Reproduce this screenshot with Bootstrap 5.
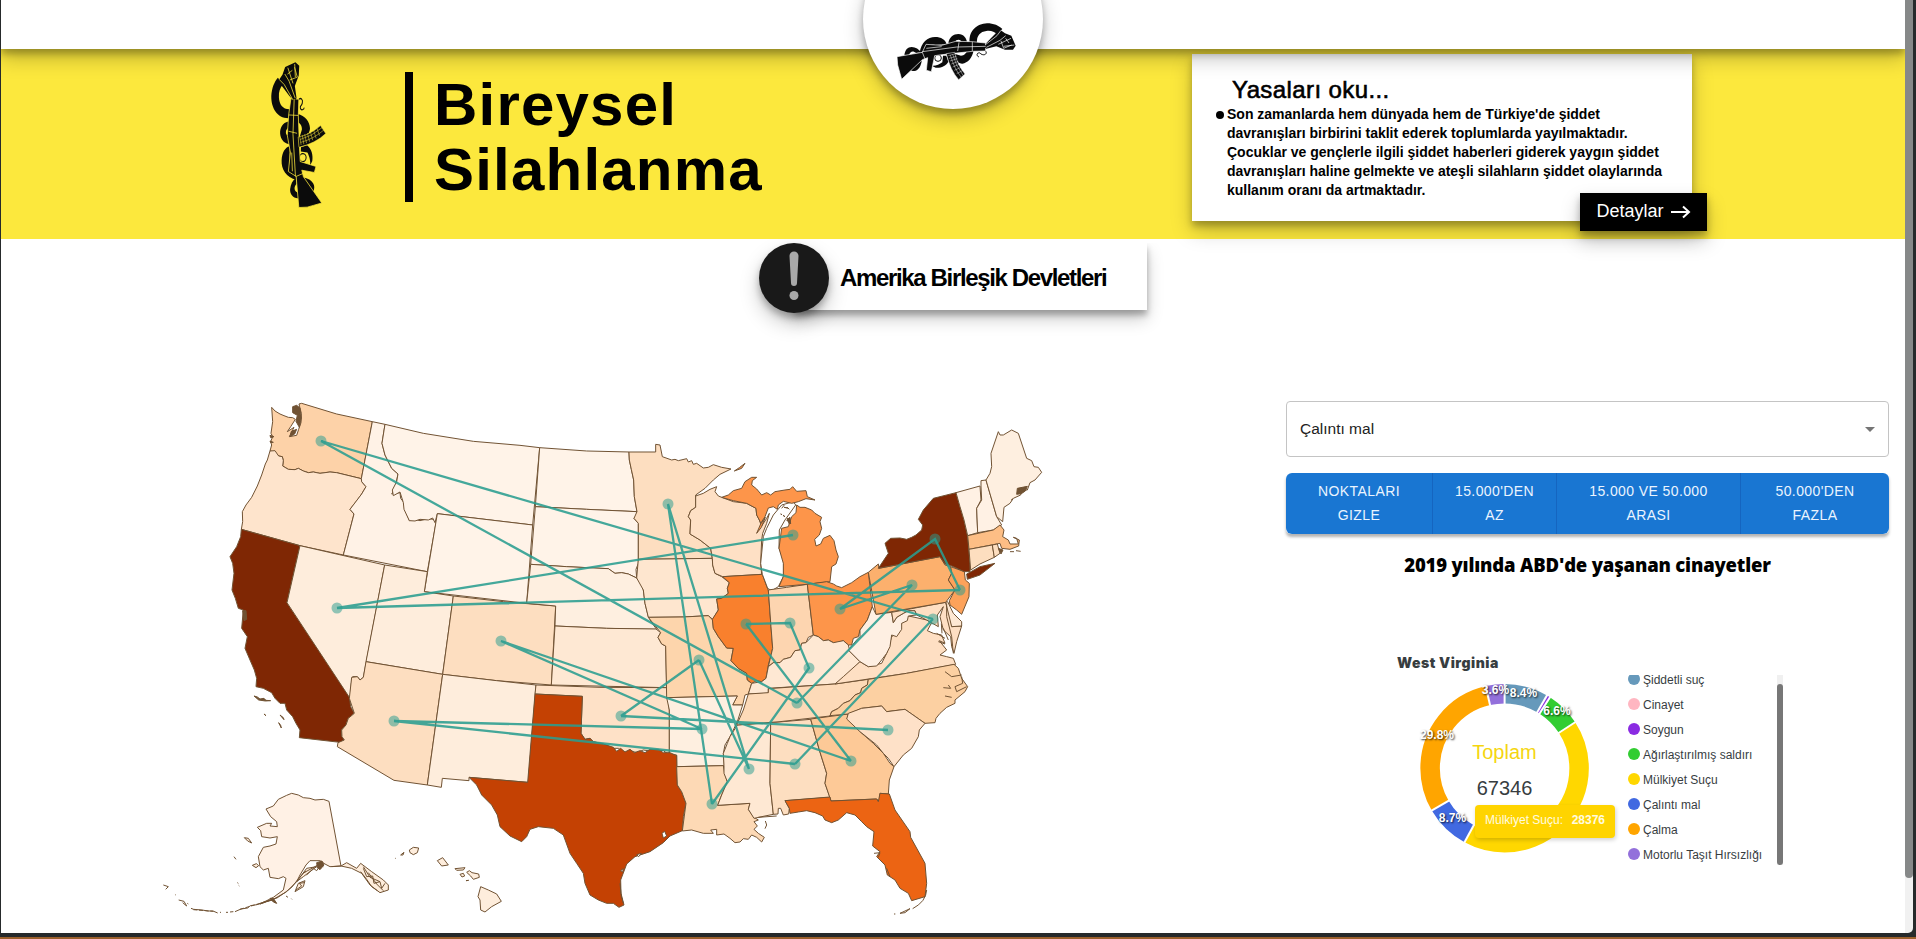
<!DOCTYPE html>
<html lang="tr">
<head>
<meta charset="utf-8">
<meta name="viewport" content="width=device-width, initial-scale=1">
<title>Bireysel Silahlanma</title>
<link href="https://cdn.jsdelivr.net/npm/bootstrap@5.3.0/dist/css/bootstrap.min.css" rel="stylesheet">
<style>
  html, body { height: 939px; overflow: hidden; }
  body { background: #9c602c; font-family: "Liberation Sans", Arial, sans-serif; color: #000; line-height: 1.2; }
  .desk { width: 1916px; height: 937px; background: #262a2b; padding: 0 3px 4px 1px; }
  .page-area { width: 1904px; height: 933px; background: #fff; }
  .page-scroll { width: 8px; height: 933px; background: #f1f1f1; border-radius: 0 0 5px 0; }
  .page-scroll .thumb-bar { height: 878px; background: #868888; border-radius: 0 0 4px 4px; }
  .deep-shadow { box-shadow: 0 10px 20px rgba(0,0,0,.22), 0 5px 7px rgba(0,0,0,.26); }
  .top-strip { height: 49px; z-index: 3; }
  .top-logo { width: 180px; height: 180px; left: 862px; top: -71px; z-index: 4; padding-top: 86px; clip-path: inset(71px -40px -40px -40px); }
  .hero { height: 190px; background: #fce83d; padding-left: 254px; z-index: 2; }
  .hero-title { margin: 23px 0 0 60px; width: 760px; height: 130px; border-left: 8px solid #000; padding: 0 0 0 21px; font-size: 60px; line-height: 65px; font-weight: 700; letter-spacing: 1.2px; }
  .law-card { width: 500px; height: 167px; margin: 5px 0 0 27px; padding: 22px 16px 0 24px; }
  .law-card h2 { font-size: 24px; line-height: 28px; font-weight: 400; margin: 0 0 0 16px; letter-spacing: .4px; -webkit-text-stroke: .6px #000; }
  .law-card p { font-size: 14px; line-height: 19px; font-weight: 700; margin: 1px 0 0 3px; white-space: nowrap; }
  .dot-mark { width: 8px; height: 8px; border-radius: 50%; background: #000; margin-top: 7px; }
  .more-btn { right: -15px; bottom: -10px; width: 127px; height: 38px; background: #000; color: #fff; font-size: 18px; border: 0; gap: 7px; padding: 0; }
  .country { height: 151px; padding-top: 4px; padding-left: 758px; }
  .country-card { width: 353px; height: 67px; margin-left: 35px; padding-left: 46px; font-size: 24px; font-weight: 700; letter-spacing: -1.35px; white-space: nowrap; box-shadow: 0 9px 16px rgba(0,0,0,.2), 0 5px 6px rgba(0,0,0,.27); clip-path: inset(0 -30px -40px -30px); line-height: 70px; }
  .alert-disc { width: 70px; height: 70px; background: #191919; left: 0; top: 0; }
  .map-box { margin-left: 149px; width: 910px; height: 540px; }
  .state-path path { stroke: #705233; stroke-width: 3; stroke-linejoin: round; }
  .side { width: 603px; margin-left: 226px; padding-top: 11px; }
  .crime-select { height: 56px; border: 1px solid #c4c4c4; border-radius: 4px; padding: 0 13px; font-size: 15.5px; color: #222; }
  .range-group { height: 61px; margin-top: 16px; box-shadow: 0 3px 3px rgba(0,0,0,.3); border-radius: 5px; }
  .range-group .btn { background: #1976d2; color: #eaf4ff; border: 0; border-right: 1px solid #1565c0; font-size: 14px; line-height: 24px; letter-spacing: .4px; padding: 0 0 2px; flex: none; margin: 0 !important; }
  .range-group .btn:last-child { border-right: 0; }
  .year-title { font: 800 18.5px/30px "Open Sans", sans-serif; margin: 16px 0 73px; letter-spacing: -.18px; white-space: nowrap; }
  .state-title { font: 900 14px/20px Inter, sans-serif; color: #373d3f; margin: 0 0 2px 111px; letter-spacing: .5px; }
  .chart-row { margin-left: 128px; height: 190px; }
  .slice-label { font-size: 12px; font-weight: 700; fill: #fff; text-anchor: middle; text-shadow: 1px 1px 2px rgba(0,0,0,.8); }
  .chart-tip { left: 61px; top: 130px; width: 140px; height: 33px; background: #ffd400; border-radius: 4px; color: #fffbe0; font-size: 12px; box-shadow: 1px 2px 4px rgba(0,0,0,.18); padding: 0 10px 2px; white-space: nowrap; }
  .legend-box { margin-left: 14px; width: 149px; height: 190px; overflow: hidden; font-size: 12px; color: #373d3f; }
  .legend-box > div { height: 25px; gap: 3px; white-space: nowrap; padding-top: 1px; }
  .legend-box > div:first-child { margin-top: -8px; }
  .legend-box i { width: 12px; height: 12px; border-radius: 50%; flex: none; margin-top: -3px; }
  .legend-scroll { width: 6px; height: 190px; background: #f0f0f0; padding-top: 9px; }
  .legend-scroll div { height: 181px; background: #777; border-radius: 3px; }
</style>
</head>
<body>
<svg width="0" height="0" class="position-absolute" aria-hidden="true">
  <defs>
    <g id="emblem">
      <g fill="#0b0b0b">
        <path d="M254 84C250 48 276 26 306 25C326 25 342 32 352 42L336 58C328 50 318 46 304 48C286 50 274 62 276 84Z"/>
        <path d="M190 86C192 66 206 57 220 57C236 58 245 68 247 86L232 86C230 76 222 72 214 76L206 86Z"/>
        <path d="M104 114C108 82 128 66 150 66C168 66 182 74 185 88L150 90C138 88 128 92 124 108Z"/>
        <path d="M208 116L228 122C238 122 244 114 246 108L266 106C262 130 248 144 232 146C220 146 212 138 208 124Z"/>
        <path d="M140 152C150 154 164 148 172 142L174 122L184 122L190 140C182 154 166 160 152 158Z"/>
        <path d="M58 122C60 104 68 96 80 96C92 97 102 102 108 112L94 114C84 106 76 108 72 120Z"/>
        <path d="M60 150L104 138L110 135C110 150 100 168 88 168C74 168 66 160 60 150Z"/>
      </g>
      <g fill="none" stroke="#0b0b0b">
        <circle cx="159" cy="129" r="10" stroke-width="3"/>
        <path stroke-width="3" d="M300 107c8 6 2 14-7 12s-6-7-13-5-3 12 2 11"/>
      </g>
      <path fill="#0b0b0b" stroke="var(--gap)" stroke-width="2" d="M36 125L112 112L123 88L170 91L212 79L262 80L302 84L302 108L262 109L180 118L149 122L139 170L124 166L128 128L112 134L50 193L43 168L38 150Z"/>
      <path fill="#0b0b0b" stroke="var(--gap)" stroke-width="1.500" d="M184 116Q196 166 221 194L240 177Q216 148 209 112Z"/>
      <path fill="#0b0b0b" d="M298 96C304 78 330 62 342 42L360 55L379 62L392 92L384 104L360 104L334 94L304 101Z"/>
      <g fill="none" stroke="var(--gap)" stroke-width="2">
        <path d="M112 110L215 96L302 94M124 100L170 95M222 82L218 108M262 80V109M112 112L120 132"/>
        <path d="M300 90L336 62L348 46M304 97L345 76L362 62M340 88L378 70M348 78L356 100L380 90M356 94L388 90M362 70L372 84"/>
        <path stroke-width="1.300" d="M190 122L212 116M192 130L214 124M195 138L217 131M199 147L220 139M203 156L225 147M208 166L230 156M215 176L234 166M196 120Q207 160 229 187M203 118Q212 152 235 182"/>
      </g>
    </g>
  </defs>
</svg>

<div class="desk d-flex">
  <div class="page-area position-relative overflow-hidden">
    <header class="top-strip bg-white position-relative deep-shadow"></header>
    <div class="top-logo bg-white rounded-circle position-absolute deep-shadow" style="--gap:#fff">
      <svg class="d-block" style="margin-left:22px" width="140" height="75" viewBox="0 0 420 225"><use href="#emblem"/></svg>
    </div>

    <section class="hero d-flex position-relative" style="--gap:#fce83d">
      <svg class="flex-shrink-0" style="margin-top:1px" width="90" height="165" viewBox="0 0 270 495"><use href="#emblem" transform="translate(166 445) rotate(-87) scale(1.22 1) translate(-60 -158)"/></svg>
      <h1 class="hero-title flex-shrink-0">Bireysel<br>Silahlanma</h1>
      <div class="law-card bg-white position-relative flex-shrink-0 deep-shadow">
        <h2>Yasaları oku...</h2>
        <div class="d-flex">
          <span class="dot-mark"></span>
          <p>Son zamanlarda hem dünyada hem de Türkiye'de şiddet<br>davranışları birbirini taklit ederek toplumlarda yayılmaktadır.<br>Çocuklar ve gençlerle ilgili şiddet haberleri giderek yaygın şiddet<br>davranışları haline gelmekte ve ateşli silahların şiddet olaylarında<br>kullanım oranı da artmaktadır.</p>
        </div>
        <button class="more-btn position-absolute d-flex align-items-center justify-content-center deep-shadow">Detaylar
          <svg width="20" height="14" viewBox="0 0 20 14" fill="none" stroke="#fff" stroke-width="2"><path d="M0 7H18M12 1.5L18 7L12 12.5"/></svg>
        </button>
      </div>
    </section>

    <section class="country">
      <div class="position-relative">
        <div class="country-card bg-white">Amerika Birleşik Devletleri</div>
        <div class="alert-disc position-absolute rounded-circle deep-shadow">
          <svg width="70" height="70" viewBox="0 0 70 70" fill="#a9a9a9"><path d="M30.5 13a4.5 4.5 0 0 1 9 0L38 40a3 3 0 0 1-6 0Z"/><circle cx="35" cy="52.500" r="4.500"/></svg>
        </div>
      </div>
    </section>

    <main class="d-flex">
      <svg class="map-box flex-shrink-0" viewBox="150 390 910 540">
        <!-- West -->
        <g class="state-path" transform="translate(220 390) scale(.33333)">
          <path fill="#fdd2a8" d="M155 52L165 63L180 72L192 77L205 82L218 83L226 88L212 110L202 125L222 112L208 140L230 136L236 118L243 98L244 70L237 42L245 40L350 72L457 95L424 266L350 248L330 246L300 250L280 246L265 248L250 243L235 235L225 239L205 238L188 228L190 212L187 200L176 198L165 186L150 183L155 165L152 155L158 140L153 130L158 95Z"/>
          <path fill="#fee4cc" d="M150 183L165 182L176 198L187 200L190 212L188 228L205 238L225 239L235 235L250 243L265 248L280 246L300 250L330 246L350 248L424 266L425 275L438 290L425 312L412 330L390 358L402 372L370 495L240 467L64 418L68 395L67 365L78 345L95 322L112 288L125 255L136 222L142 210Z"/>
          <path fill="#7f2704" d="M64 418L240 467L201 638L388 918L392 950L403 970L385 985L378 1005L365 1020L366 1040L373 1050L360 1057L238 1043L240 1020L228 1000L218 980L200 960L195 940L180 940L165 925L155 908L130 895L108 890L110 865L103 840L90 810L75 775L82 740L65 715L70 660L55 655L46 625L36 600L42 550L38 520L30 500L50 470L62 440Z"/>
          <path fill="#feeddc" d="M240 467L494 525L430 862L420 870L412 860L398 860L394 880L390 925L201 638Z"/>
          <path fill="#fff2e6" d="M457 95L495 103L486 160L495 195L515 235L534 252L525 295L515 312L540 308L542 325L552 338L555 358L568 392L585 388L600 392L625 386L640 388L648 398L622 545L370 495L402 372L390 358L425 312L438 290L425 275L424 266Z"/>
          <path fill="#fff3e8" d="M495 103L610 130L760 154L900 166L959 173L938 405L652 371L645 398L638 384L625 390L600 388L585 393L568 392L552 358L550 338L540 306L520 317L517 300L530 275L534 252L515 235L495 195L486 160Z"/>
          <path fill="#fff3e8" d="M652 371L938 405L920 640L613 605Z"/>
          <path fill="#feeddc" d="M494 525L622 545L613 605L700 618L668 853L438 815Z"/>
          <path fill="#fddec0" d="M700 618L850 635L1007 648L994 885L830 872L668 853Z"/>
          <path fill="#fddec0" d="M438 815L668 853L622 1185L522 1171L352 1070L354 1058L373 1050L366 1040L365 1020L378 1005L385 985L403 970L388 925L395 862L412 860L420 870L430 862Z"/>
          <path fill="#feeddc" d="M668 853L830 872L948 885L925 1177L747 1162L747 1172L667 1165L664 1192L622 1185Z"/>
          <path fill="#705233" d="M218 50l12 -4l10 8l4 30l-6 28l-10 -18l4 -18l-14 -8zM214 124l16 -6l-6 14l-14 8zM102 918l10 3l8 6l12 -2l6 6l14 1l-16 1l-20 -3zM132 972l6 5zM180 975l10 8l2 6zM176 998l6 8l2 8zM68 662l10 0l2 26l-8 4zM150 136l12 4l-10 3zM150 153l10 4l-8 1z"/>
        </g>
        <!-- Central -->
        <g class="state-path" transform="translate(500 420) scale(.33333)">
          <path fill="#fff3e8" d="M119 83L260 93L387 96L388 120L394 148L401 180L403 230L411 275L260 268L106 260Z"/>
          <path fill="#fff3e8" d="M106 260L260 268L411 275L412 285L402 295L415 310L415 430L408 448L410 474L385 462L365 458L345 460L325 446L200 440L92 433Z"/>
          <path fill="#feefe0" d="M92 433L200 440L325 446L345 460L365 458L385 462L410 474L425 490L430 510L435 550L445 590L455 608L470 628L320 625L165 618L167 558L80 550Z"/>
          <path fill="#fee8d3" d="M165 618L320 625L468 627L482 638L474 652L485 672L497 678L500 803L154 795Z"/>
          <path fill="#fee1c7" d="M108 795L300 802L500 803L508 870L508 1005L490 992L470 990L450 993L430 990L410 998L390 992L375 998L355 985L340 985L310 972L280 965L270 955L255 958L243 940L247 829L105 822Z"/>
          <path fill="#fddec0" d="M387 96L467 96L467 73L480 75L487 110L515 120L525 118L535 122L560 116L565 126L575 122L580 133L590 130L610 144L625 142L640 134L665 142L693 147L660 163L640 180L615 205L587 225L587 262L572 272L565 290L572 300L570 342L600 360L632 385L637 415L415 418L415 310L402 295L411 275L403 230L401 180L394 148L388 120Z"/>
          <path fill="#fee6cf" d="M415 418L637 415L638 435L645 460L665 470L688 488L682 505L685 520L665 535L650 537L655 570L638 598L625 587L550 591L445 592L435 550L430 510L410 474Z"/>
          <path fill="#fdd5ac" d="M445 592L550 591L625 587L638 600L640 625L655 650L680 684L700 685L693 722L715 745L740 760L742 780L755 790L745 822L735 825L728 855L698 855L712 828L500 833L497 678L485 672L474 652L482 638Z"/>
          <path fill="#fee0c5" d="M587 228L610 220L630 208L650 200L645 215L655 228L665 232L700 245L740 250L768 265L770 285L778 300L785 318L800 295L808 280L800 310L788 340L785 360L782 430L785 463L668 470L645 460L638 435L637 415L632 385L600 360L570 342L572 300L565 290L572 272L587 262Z"/>
          <path fill="#f9802d" d="M668 470L787 463L805 512L813 620L818 685L805 735L798 775L785 785L770 782L755 790L742 780L740 760L715 745L693 722L700 685L680 684L655 650L640 625L637 598L655 570L650 537L665 535L685 520L682 505L688 488Z"/>
          <path fill="#fff" d="M787 463L782 430L790 350L800 325L820 285L845 255L880 245L887 255L855 300L838 330L837 385L852 420L850 470L835 500L815 512L803 505Z"/>
          <path fill="#fd954a" d="M665 232L685 225L700 212L725 205L735 185L755 172L770 172L757 182L755 195L770 207L785 225L800 218L812 225L825 215L855 210L870 208L878 200L890 214L918 212L922 230L945 240L918 236L895 245L875 250L850 244L835 255L832 268L820 260L805 264L795 290L782 310L778 300L770 285L768 265L740 250L700 242Z"/>
          <path fill="#fd954a" d="M703 153l15 -10l17 -13l-10 15zM845 265l8 -10M862 262l6 6M850 285l4 6zM862 295l10 8l-2 16zM770 340l12 -28l14 -20l-12 30z"/>
          <path fill="#fdd5b0" d="M805 510L860 502L922 493L940 645L925 652L918 668L905 670L900 690L885 692L872 712L850 718L840 728L820 728L805 740L818 685L813 620Z"/>
          <path fill="#feefe0" d="M500 833L712 828L698 855L728 855L712 905L700 930L690 950L675 975L670 1000L673 1037L530 1040L530 1005L508 1003L508 870Z"/>
        </g>
        <!-- South -->
        <g class="state-path" transform="translate(450 720) scale(.33333)">
          <path fill="#c44103" d="M255 -78L397 -71L393 40L405 58L420 55L430 65L460 72L490 82L500 94L512 85L525 96L540 88L553 98L570 92L585 98L600 88L625 88L640 98L660 98L680 107L682 195L695 215L708 250L700 290L697 332L660 348L640 368L600 395L555 410L530 432L512 480L513 520L522 555L507 562L490 550L470 550L445 540L420 525L405 490L400 460L380 430L360 400L340 345L310 325L265 320L240 328L230 350L215 365L180 348L150 320L142 285L125 255L95 225L80 195L57 172L233 187Z"/>
          <path fill="#fff" stroke="none" d="M636 340l8 -6l6 14l-10 6zM560 404l14 -4l-8 10zM512 452l8 -6l-2 10z"/>
          <path fill="#fdd9b5" d="M680 140L820 137L824 160L832 185L815 225L803 256L900 250L895 268L912 292L925 300L912 305L922 318L912 328L925 340L943 352L935 366L920 352L905 345L895 358L880 356L870 366L855 368L840 355L822 342L800 345L800 328L782 330L790 340L760 340L725 330L697 333L708 250L695 215L682 195Z"/>
          <path fill="#fee8d3" d="M862 15L962 8L960 190L970 283L945 288L912 295L895 268L900 250L803 256L815 225L832 185L822 160L822 137L820 100L832 70L840 50Z"/>
          <path fill="#fddec0" d="M962 8L1082 -2L1108 90L1130 160L1125 190L1140 232L1005 242L1018 265L1016 282L1000 285L992 265L985 265L984 282L970 283L960 190Z"/>
          <path fill="#fdc997" d="M1082 -3L1195 -18L1192 -5L1215 20L1230 35L1270 70L1300 100L1320 130L1332 140L1318 180L1315 222L1290 220L1288 245L1280 237L1143 243L1125 190L1130 160L1108 90Z"/>
          <path fill="#ec6413" d="M1005 242L1140 231L1143 243L1280 237L1285 245L1290 220L1318 222L1335 270L1380 335L1382 352L1425 430L1430 490L1425 530L1385 542L1375 520L1350 505L1335 480L1312 465L1305 435L1280 410L1290 395L1268 378L1272 335L1250 320L1235 305L1215 285L1190 278L1165 300L1145 308L1125 300L1118 288L1095 278L1070 272L1045 276L1020 280L1018 265Z"/>
          <path fill="none" d="M1430 510Q1428 545 1388 566M1350 580L1380 566L1365 578ZM1332 582L1336 582M946 303L950 315L945 326M510 490L514 530L520 550M925 292L980 288M1310 445L1320 470M1272 400L1290 398L1285 412"/>
        </g>
        <!-- East -->
        <g class="state-path" transform="translate(780 420) scale(.33333)">
          <path fill="#fd954a" d="M-3 500L10 470L10 430L-3 385L5 325L25 320L35 290L48 278L50 255L60 262L75 262L95 270L105 280L125 292L120 305L125 325L118 345L104 358L108 378L122 372L130 355L150 346L162 362L168 390L175 410L168 432L155 440L150 485L80 493Z"/>
          <path fill="#fd954a" d="M82 493L140 485L160 492L170 498L185 503L215 488L240 470L265 457L277 560L262 600L240 630L235 650L220 655L215 675L205 675L190 662L175 668L160 668L145 660L130 662L115 650L100 645Z"/>
          <path fill="#fee8d3" d="M100 645L115 650L130 662L145 660L160 668L190 662L205 675L210 695L240 725L200 770L165 792L-35 805L-35 820L-95 822L-85 790L-55 785L-42 775L-35 740L-20 728L0 728L10 718L32 712L45 692L60 690L65 670L78 668Z"/>
          <path fill="#fddab8" d="M-95 822L-35 818L-35 806L165 792L265 778L262 795L245 805L242 818L225 825L210 842L190 850L175 865L155 875L150 888L0 905L-130 915L-110 870Z"/>
          <path fill="#fedfc3" d="M165 792L190 770L240 725L265 740L305 730L320 700L335 650L350 640L370 600L385 588L405 592L440 600L455 608L442 632L460 640L485 645L495 670L478 662L500 690L480 705L500 710L520 715L527 733L380 760Z"/>
          <path fill="#feefe2" d="M277 560L288 583L335 577L340 608L350 592L370 580L385 572L405 572L410 585L385 588L382 602L365 610L365 628L350 650L335 645L330 680L320 700L305 720L290 738L265 740L240 725L205 690L230 660L240 650L240 630L262 600Z"/>
          <path fill="#fedfc3" d="M335 577L497 547L512 590L515 620L545 618L530 665L522 700L515 680L512 650L490 630L485 610L480 590L490 560L472 585L475 620L440 600L410 585L405 572L385 572L370 580L350 592L340 608Z"/>
          <path fill="#fee8d3" d="M497 547L503 545L520 580L545 605L545 618L515 620Z"/>
          <path fill="#fcb06d" d="M265 457L295 432L297 445L480 410L495 435L512 440L515 460L505 480L525 510L497 547L288 583Z"/>
          <path fill="#fda25a" d="M512 440L553 455L556 480L568 490L567 530L545 583L530 570L510 555L508 542L525 510L505 480L515 460Z"/>
          <path fill="#7f2704" d="M295 445L325 400L315 370L332 355L360 354L380 358L395 352L408 345L425 330L428 315L415 298L430 270L460 235L528 218L540 260L552 300L563 350L570 430L570 455L553 455L515 438L495 432L480 410ZM560 462L600 440L645 430L600 465L562 478Z"/>
          <path fill="#fff1e4" d="M528 218L600 198L603 240L590 265L593 338L563 347L552 300L540 260Z"/>
          <path fill="#fff1e4" d="M603 198L603 182L618 180L650 290L665 315L640 330L593 338L590 265L605 240Z"/>
          <path fill="#feefe0" d="M618 180L630 160L635 140L633 100L655 35L660 45L670 45L695 30L715 40L740 115L755 122L762 140L775 142L785 157L765 180L750 188L742 210L725 210L722 225L700 235L690 250L672 262L668 305L650 290Z"/>
          <path fill="#fdbe85" d="M563 347L640 330L660 315L672 330L668 350L685 360L690 372L715 372L710 355L700 352L718 360L716 378L690 388L665 385L660 370L567 388Z"/>
          <path fill="#fddebf" d="M567 388L637 375L643 412L600 432L572 450Z"/>
          <path fill="#fddebf" d="M637 375L652 372L660 400L643 412Z"/>
          <path fill="#fcd0a2" d="M150 887L155 875L175 865L190 850L210 842L225 825L242 818L245 805L262 795L265 778L380 760L522 733L535 745L545 775L563 800L555 815L525 840L525 850L500 862L480 880L468 895L465 908L435 910L375 868L320 875L305 858L245 865L205 882Z"/>
          <path fill="#fee1c8" d="M205 880L245 865L305 858L320 875L375 868L435 910L418 930L415 950L395 985L370 1005L342 1040L325 1015L310 1000L290 975L240 935L200 897Z"/>
          <path fill="none" d="M495 755L515 770L545 765M490 803L512 805L505 795M495 828L515 832M470 640L495 655M475 665L495 672M500 550L500 590L515 650L520 700M484 610L486 640M490 625L505 660M690 395l12 0M708 392l14 2M545 770L548 790L525 800L530 815L560 800"/>
          <path fill="#705233" stroke-width="1" d="M712 205l30 -6l-6 14l-12 8l-14 2zM655 385l14 5l-6 12zM694 240l4 -3zM2 282l4 2zM12 262l12 2zM20 300l10 -8l2 20z"/>
        </g>
        <!-- Alaska and Hawaii -->
        <g class="state-path" transform="translate(150 740) scale(.33333)">
          <path fill="#fff1e5" d="M425 160L445 165L460 173L480 175L495 180L520 178L537 184L573 378L540 380L525 372L510 362L480 362L468 375L450 405L440 425L410 455L370 478L330 492L370 472L400 450L408 415L400 410L385 416L360 412L355 385L340 390L330 380L325 350L340 322L360 318L378 312L382 290L360 294L335 290L332 272L322 262L350 250L365 250L360 258L382 260L380 245L362 230L348 207L370 198L385 178L410 166Z"/>
          <path fill="#feeddc" d="M573 378L590 368L620 385L632 370L665 395L700 420L715 435L715 450L690 458L660 435L635 400L605 385ZM435 455L445 430L465 422L460 440ZM440 425L470 385L500 380L460 410ZM307 376l12 -5l7 6l-8 6zM283 293l12 2l10 14l-12 -6zM778 330L790 322L806 324L802 338L790 344L780 338ZM862 362L878 353L895 375L875 378ZM915 386L945 383L940 390L920 391ZM930 403l10 -3l4 8l-8 3zM950 397l8 -5l8 6l20 4l2 10l-18 6l-8 -10zM752 345l10 -8l-3 8zM948 422l8 -1zM735 355l2 0M992 440L1015 450L1040 462L1054 484L1025 500L1005 516L992 510L990 480L984 470Z"/>
          <path fill="#705233" stroke-width="1" d="M500 368l16 -5l6 12l-12 14l-8 -6zM360 475l10 0l10 15l-10 -4z"/>
          <path fill="none" stroke-width="4" d="M640 385L650 410L668 408L672 430L690 425L695 445L705 430M632 395L650 418L665 440L682 452M655 398L680 432L700 452M438 450L455 438L448 430L462 428M470 405L490 385L500 392L512 375L520 380"/>
          <path fill="none" d="M40 435l15 5l-8 8M75 463l2 2M86 480l16 4l8 14l-12 -10M112 490l3 2M123 505l8 3l25 2l18 3l15 0l14 6M210 517l3 0M228 517l6 0M240 516l10 -1M255 515l18 -8l20 -3l8 -7l20 -3l20 -6l20 -8l20 -6l25 -17l20 -16l14 -18l20 -23l8 -6M252 350l6 8M262 428l3 2M266 436l2 2M408 468l6 4M424 476l2 2M462 398L495 380L515 368M330 490L350 484L370 480L378 490M545 380L573 378M640 380L660 412L690 425"/>
          <path stroke-width="7" fill="none" d="M130 509L190 514M270 508L330 490L368 478" stroke-dasharray="12 5"/>
        </g>
        <g fill="none" stroke="#2a9d8f" stroke-width="2.300" stroke-opacity=".88">
          <path d="M321 441L797 703M321 441L933 619M337 608L793 535M337 608L960 590M501 641L702 729M501 641L851 761M394 721L702 729M394 721L795 764M668 504L712 804M668 504L749 769M699 660L621 716M699 660L749 769M621 716L888 730M746 624L790 623L809 668L712 804M746 624L851 761M797 703L912 585L840 609L935 539L960 590M795 764L933 619"/>
        </g>
        <g fill="#2a9d8f" fill-opacity=".52">
          <circle cx="321" cy="441" r="5.500"/><circle cx="337" cy="608" r="5.500"/><circle cx="501" cy="641" r="5.500"/><circle cx="394" cy="721" r="5.500"/><circle cx="668" cy="504" r="5.500"/><circle cx="793" cy="535" r="5.500"/><circle cx="746" cy="624" r="5.500"/><circle cx="790" cy="623" r="5.500"/><circle cx="809" cy="668" r="5.500"/><circle cx="797" cy="703" r="5.500"/><circle cx="699" cy="660" r="5.500"/><circle cx="621" cy="716" r="5.500"/><circle cx="702" cy="729" r="5.500"/><circle cx="712" cy="804" r="5.500"/><circle cx="749" cy="769" r="5.500"/><circle cx="795" cy="764" r="5.500"/><circle cx="851" cy="761" r="5.500"/><circle cx="888" cy="730" r="5.500"/><circle cx="933" cy="619" r="5.500"/><circle cx="960" cy="590" r="5.500"/><circle cx="935" cy="539" r="5.500"/><circle cx="912" cy="585" r="5.500"/><circle cx="840" cy="609" r="5.500"/>
        </g>
      </svg>

      <aside class="side flex-shrink-0">
        <div class="crime-select d-flex align-items-center justify-content-between">
          <span>Çalıntı mal</span>
          <svg width="10" height="5" viewBox="0 0 10 5"><path fill="#757575" d="M0 0H10L5 5Z"/></svg>
        </div>
        <div class="range-group btn-group d-flex">
          <button class="btn" style="width:147px">NOKTALARI<br>GIZLE</button>
          <button class="btn" style="width:124px">15.000'DEN<br>AZ</button>
          <button class="btn" style="width:184px">15.000 VE 50.000<br>ARASI</button>
          <button class="btn" style="width:148px">50.000'DEN<br>FAZLA</button>
        </div>
        <h3 class="year-title text-center">2019 yılında ABD'de yaşanan cinayetler</h3>
        <h4 class="state-title">West Virginia</h4>
        <div class="chart-row d-flex position-relative">
          <svg class="flex-shrink-0" width="200" height="190" viewBox="1414 675 200 190">
            <g fill="none" stroke-width="19.500" transform="rotate(-90 1504.600 768.200)">
              <circle cx="1504.600" cy="768.200" r="74.500" stroke="#6699bb" pathLength="100" stroke-dasharray="8.400 91.600"/>
              <circle cx="1504.600" cy="768.200" r="74.500" stroke="#8a2be2" pathLength="100" stroke-dasharray=".8 99.200" stroke-dashoffset="-8.400"/>
              <circle cx="1504.600" cy="768.200" r="74.500" stroke="#32cd32" pathLength="100" stroke-dasharray="6.600 93.400" stroke-dashoffset="-9.200"/>
              <circle cx="1504.600" cy="768.200" r="74.500" stroke="#ffd700" pathLength="100" stroke-dasharray="42.100 57.900" stroke-dashoffset="-15.800"/>
              <circle cx="1504.600" cy="768.200" r="74.500" stroke="#4169e1" pathLength="100" stroke-dasharray="8.700 91.300" stroke-dashoffset="-57.900"/>
              <circle cx="1504.600" cy="768.200" r="74.500" stroke="#ffa500" pathLength="100" stroke-dasharray="29.800 70.200" stroke-dashoffset="-66.600"/>
              <circle cx="1504.600" cy="768.200" r="74.500" stroke="#9370db" pathLength="100" stroke-dasharray="3.600 96.400" stroke-dashoffset="-96.400"/>
            </g>
            <g stroke="#fff" stroke-width="2" transform="translate(1504.600 768.200)">
              <path d="M0 -64V-86" transform="rotate(0)"/><path d="M0 -64V-86" transform="rotate(30.200)"/><path d="M0 -64V-86" transform="rotate(32.600)"/><path d="M0 -64V-86" transform="rotate(56.900)"/><path d="M0 -64V-86" transform="rotate(208.400)"/><path d="M0 -64V-86" transform="rotate(239.800)"/><path d="M0 -64V-86" transform="rotate(347)"/>
            </g>
            <text class="slice-label" x="1495.500" y="694">3.6%</text>
            <text class="slice-label" x="1523.500" y="697">8.4%</text>
            <text class="slice-label" x="1557" y="715">6.6%</text>
            <text class="slice-label" x="1437" y="739">29.8%</text>
            <text class="slice-label" x="1452.500" y="822">8.7%</text>
            <text x="1504.500" y="759" text-anchor="middle" font-size="20" fill="#f5d60f">Toplam</text>
            <text x="1504.500" y="795" text-anchor="middle" font-size="20" fill="#373d3f">67346</text>
          </svg>
          <div class="chart-tip position-absolute d-flex align-items-center justify-content-between"><span>Mülkiyet Suçu:</span><b>28376</b></div>
          <div class="legend-box flex-shrink-0">
            <div class="d-flex align-items-center"><i style="background:#6699bb"></i>Şiddetli suç</div>
            <div class="d-flex align-items-center"><i style="background:#ffb6c1"></i>Cinayet</div>
            <div class="d-flex align-items-center"><i style="background:#8a2be2"></i>Soygun</div>
            <div class="d-flex align-items-center"><i style="background:#32cd32"></i>Ağırlaştırılmış saldırı</div>
            <div class="d-flex align-items-center"><i style="background:#ffd700"></i>Mülkiyet Suçu</div>
            <div class="d-flex align-items-center"><i style="background:#4169e1"></i>Çalıntı mal</div>
            <div class="d-flex align-items-center"><i style="background:#ffa500"></i>Çalma</div>
            <div class="d-flex align-items-center"><i style="background:#9370db"></i>Motorlu Taşıt Hırsızlığı</div>
          </div>
          <div class="legend-scroll flex-shrink-0"><div></div></div>
        </div>
      </aside>
    </main>
  </div>
  <div class="page-scroll"><div class="thumb-bar"></div></div>
</div>
<script src="https://cdn.jsdelivr.net/npm/bootstrap@5.3.0/dist/js/bootstrap.bundle.min.js"></script>
</body>
</html>
